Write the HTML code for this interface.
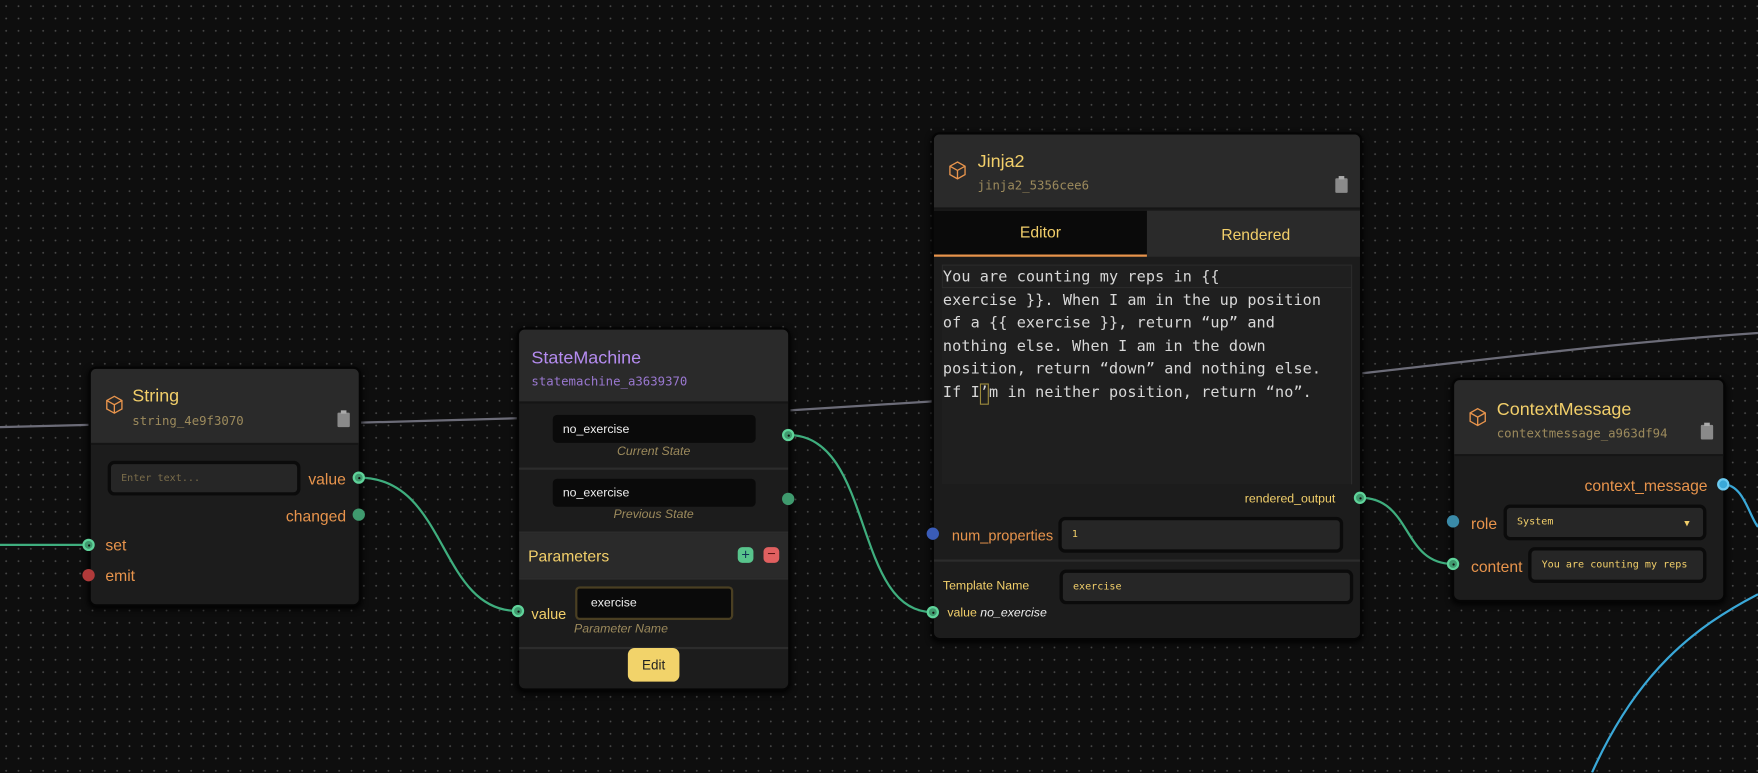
<!DOCTYPE html>
<html><head><meta charset="utf-8">
<style>
*{box-sizing:border-box;margin:0;padding:0}
html,body{width:1758px;height:772px;overflow:hidden;background:#0e0e0e}
#w{position:absolute;left:0;top:0;width:1568px;height:689px;transform:scale(1.12117);transform-origin:0 0;
background-color:#0e0e0e;background-image:radial-gradient(circle,#4a4a4a 0.7px,transparent 1px);background-size:11px 11px;
font-family:"Liberation Sans",sans-serif}
.a{position:absolute}
.node{position:absolute;background:#1c1c1c;border:2px solid #050505;border-radius:7px;overflow:hidden;box-shadow:0 2px 6px #000}
.hdr{position:absolute;left:0;right:0;top:0;background:#2a2a2a;border-bottom:2px solid #151515}
.title{position:absolute;color:#f2cf6a;font-size:16px}
.id{position:absolute;color:#9c8a5c;font-family:"DejaVu Sans Mono","Liberation Mono",monospace;font-size:11px}
.clip{position:absolute;width:11px;height:13px;background:#8a8a8a;border-radius:1px}
.clip:before{content:"";position:absolute;left:3px;top:-2px;width:5px;height:3px;background:#aaa}
.lbl{position:absolute;color:#e8944c;font-size:14px}
.port{position:absolute;width:11px;height:11px;border-radius:50%;transform:translate(-50%,-50%)}
.pg{background:#3f9a6e}
.pd{background:#3f9a6e;border:2px solid #5fd39a}
.pd:after{content:"";position:absolute;left:2.5px;top:2.5px;width:2px;height:2px;background:#111;border-radius:50%}
.inp{position:absolute;background:#0a0a0a;border-radius:4px;color:#eee;font-size:11px;padding-left:9px;display:flex;align-items:center}
.inp2{position:absolute;background:#262626;border:3px solid #0b0b0b;border-radius:6px;color:#f2cf6a;font-family:"DejaVu Sans Mono",monospace;font-size:9px;padding-left:9px;display:flex;align-items:center}
.sub{position:absolute;color:#9c8a5c;font-style:italic;font-size:11px}
.div{position:absolute;left:0;right:0;height:2px;background:#2c2c2c}
</style></head><body><div id="w">
<svg class="a" style="left:0;top:0" width="1568" height="689">
<g fill="none" stroke-width="2">
<path d="M0 381 L79 379" stroke="#6c6c78"/>
<path d="M321 377 L462 373" stroke="#6c6c78"/>
<path d="M704 366 L832 358" stroke="#6c6c78"/>
<path d="M1214 333 C1350 318 1450 305 1568 297" stroke="#6c6c78"/>
<path d="M0 486 L79 486" stroke="#3fae7e"/>
<path d="M320 426 C400 426 390 545 462 545" stroke="#3fae7e"/>
<path d="M703 388 C780 388 760 546 832 546" stroke="#3fae7e"/>
<path d="M1213 444 C1260 444 1250 503 1296 503" stroke="#3fae7e"/>
<path d="M1537 432 C1555 432 1560 460 1568 470" stroke="#3aa8d8"/>
<path d="M1420 689 C1460 600 1510 560 1568 530" stroke="#3aa8d8"/>
</g></svg>

<!-- String -->
<div class="node" style="left:79px;top:327px;width:243px;height:214px">
<div class="hdr" style="height:68px"></div>
<svg class="a" style="left:12px;top:23px" width="18" height="18" viewBox="0 0 24 24" fill="none" stroke="#e8944c" stroke-width="1.6"><path d="M12 2 L21 7 V17 L12 22 L3 17 V7 Z M3 7 L12 12 L21 7 M12 12 V22"/></svg>
<div class="title" style="left:37px;top:16px">String</div>
<div class="id" style="left:37px;top:40px">string_4e9f3070</div>
<div class="clip" style="left:220px;top:39px"></div>
<div class="inp2" style="left:15px;top:82px;width:172px;height:31px;color:#7a6c4a">Enter text...</div>
</div>
<div class="lbl" style="left:275px;top:419px">value</div>
<div class="lbl" style="left:255px;top:452px">changed</div>
<div class="lbl" style="left:94px;top:478px">set</div>
<div class="lbl" style="left:94px;top:505px">emit</div>
<div class="port pd" style="left:320px;top:426px"></div>
<div class="port pg" style="left:320px;top:459px"></div>
<div class="port pd" style="left:79px;top:486px"></div>
<div class="port" style="left:79px;top:513px;background:#b03a3a"></div>

<!-- StateMachine -->
<div class="node" style="left:461px;top:292px;width:244px;height:324px">
<div class="hdr" style="height:66px"></div>
<div class="title" style="left:11px;top:17px;color:#b58cf0">StateMachine</div>
<div class="id" style="left:11px;top:40px;color:#9a78d0">statemachine_a3639370</div>
<div class="inp" style="left:30px;top:76px;width:181px;height:25px">no_exercise</div>
<div class="sub" style="left:0;width:240px;text-align:center;top:103px">Current State</div>
<div class="div" style="top:123px"></div>
<div class="inp" style="left:30px;top:133px;width:181px;height:25px">no_exercise</div>
<div class="sub" style="left:0;width:240px;text-align:center;top:159px">Previous State</div>
<div class="div" style="top:180px"></div>
<div class="a" style="left:0;right:0;top:182px;height:39px;background:#2a2a2a"></div>
<div class="a" style="left:8px;top:194px;color:#f2cf6a;font-size:14px">Parameters</div>
<div class="a" style="left:195px;top:194px;width:14px;height:14px;border-radius:4px;background:#58c48c;color:#135;font-size:13px;line-height:13px;text-align:center">+</div>
<div class="a" style="left:218px;top:194px;width:14px;height:14px;border-radius:4px;background:#e06060;color:#511;font-size:13px;line-height:12px;text-align:center">−</div>
<div class="div" style="top:221px"></div>
<div class="a" style="left:11px;top:246px;color:#f2cf6a;font-size:13px">value</div>
<div class="inp" style="left:50px;top:229px;width:141px;height:30px;border:2px solid #4a3f22;padding-left:12px">exercise</div>
<div class="sub" style="left:49px;top:261px">Parameter Name</div>
<div class="div" style="top:283px"></div>
<div class="a" style="left:97px;top:284px;width:46px;height:30px;background:#f2d36a;border-radius:6px;color:#222;font-size:12px;text-align:center;line-height:30px">Edit</div>
</div>
<div class="port pd" style="left:462px;top:545px"></div>
<div class="port pd" style="left:703px;top:388px"></div>
<div class="port pg" style="left:703px;top:445px"></div>

<!-- Jinja2 -->
<div class="node" style="left:831px;top:118px;width:384px;height:453px">
<div class="hdr" style="height:67px"></div>
<svg class="a" style="left:12px;top:23px" width="18" height="18" viewBox="0 0 24 24" fill="none" stroke="#e8944c" stroke-width="1.6"><path d="M12 2 L21 7 V17 L12 22 L3 17 V7 Z M3 7 L12 12 L21 7 M12 12 V22"/></svg>
<div class="title" style="left:39px;top:16px">Jinja2</div>
<div class="id" style="left:39px;top:39px">jinja2_5356cee6</div>
<div class="clip" style="left:358px;top:39px"></div>
<div class="a" style="left:0;top:68px;width:190px;height:41px;background:#0a0a0a;border-bottom:2px solid #e8944c;color:#f2cf6a;font-size:14px;text-align:center;line-height:38px">Editor</div>
<div class="a" style="left:190px;top:68px;width:194px;height:41px;background:#2a2a2a;color:#f2cf6a;font-size:14px;text-align:center;line-height:42px">Rendered</div>
<div class="a" style="left:7px;top:116px;width:366px;height:196px;background:#1f1f1f;border-right:1px solid #2c2c2c"></div>
<div class="a" style="left:7px;top:116px;width:366px;height:21px;border:1px solid #2a2a2a"></div>
<div class="a" style="left:8px;top:117px;width:370px;color:#d8d8d8;font-family:'DejaVu Sans Mono',monospace;font-size:13.5px;letter-spacing:0.1px;line-height:20.6px;white-space:pre">You are counting my reps in {{
exercise }}. When I am in the up position
of a {{ exercise }}, return “up” and
nothing else. When I am in the down
position, return “down” and nothing else.
If I’m in neither position, return “no”.</div>
<div class="a" style="left:41px;top:222px;width:8px;height:19px;border:1px solid #9c8a3c"></div>
<div class="a" style="right:22px;top:319px;color:#f2cf6a;font-size:11px">rendered_output</div>
<div class="lbl" style="left:16px;top:350px;font-size:13px">num_properties</div>
<div class="inp2" style="left:111px;top:341px;width:254px;height:32px">1</div>
<div class="div" style="top:379px"></div>
<div class="a" style="left:8px;top:397px;color:#f2cf6a;font-size:11px">Template Name</div>
<div class="inp2" style="left:112px;top:388px;width:262px;height:31px">exercise</div>
<div class="a" style="left:12px;top:421px;color:#f2cf6a;font-size:11px">value <i style="color:#eee">no_exercise</i></div>
</div>
<div class="port pd" style="left:1213px;top:444px"></div>
<div class="port" style="left:832px;top:476px;background:#3a5cb8"></div>
<div class="port pd" style="left:832px;top:546px"></div>

<!-- ContextMessage -->
<div class="node" style="left:1295px;top:337px;width:244px;height:200px">
<div class="hdr" style="height:68px"></div>
<svg class="a" style="left:12px;top:24px" width="18" height="18" viewBox="0 0 24 24" fill="none" stroke="#e8944c" stroke-width="1.6"><path d="M12 2 L21 7 V17 L12 22 L3 17 V7 Z M3 7 L12 12 L21 7 M12 12 V22"/></svg>
<div class="title" style="left:38px;top:18px">ContextMessage</div>
<div class="id" style="left:38px;top:41px">contextmessage_a963df94</div>
<div class="clip" style="left:220px;top:40px"></div>
<div class="lbl" style="right:14px;top:86px">context_message</div>
<div class="lbl" style="left:15px;top:120px">role</div>
<div class="inp2" style="left:44px;top:111px;width:181px;height:32px;color:#f2cf6a">System<span style="position:absolute;right:12px;font-size:8px">▼</span></div>
<div class="lbl" style="left:15px;top:158px">content</div>
<div class="inp2" style="left:66px;top:149px;width:159px;height:32px;color:#f2cf6a">You are counting my reps</div>
</div>
<div class="port" style="left:1537px;top:432px;background:#3aa8d8;border:2px solid #6ccaf0"></div>
<div class="port" style="left:1296px;top:465px;background:#3a8aa8"></div>
<div class="port pd" style="left:1296px;top:503px"></div>
</div></body></html>
